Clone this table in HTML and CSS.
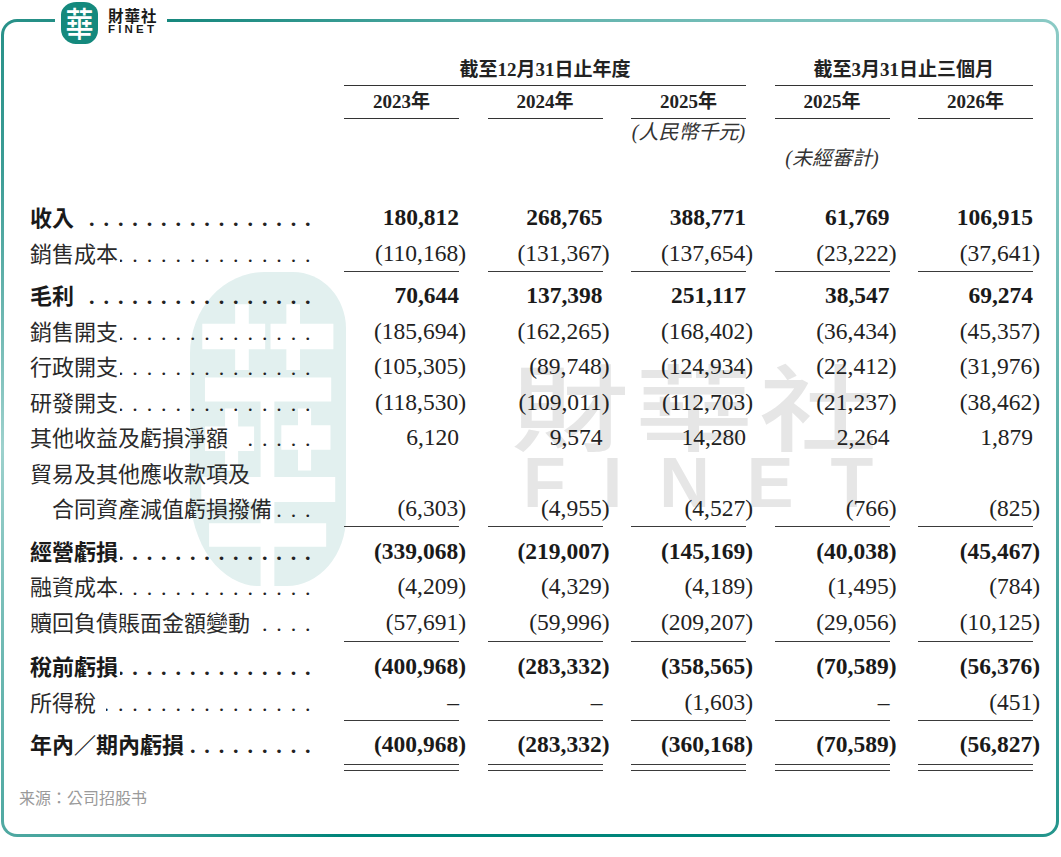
FILE: index.html
```html
<!DOCTYPE html>
<html lang="zh-Hant">
<head>
<meta charset="utf-8">
<title>財務資料</title>
<link rel="stylesheet" href="styles.css">
</head>
<body>
<div class="frame">
  <div class="logo">
    <div class="logo-mark"><span>華</span></div>
    <div class="logo-text"><span class="logo-cn">財華社</span><span class="logo-en">FINET</span></div>
  </div>
  <div class="wm-seal"><span>華</span></div>
  <div class="wm-cn">財華社</div>
  <div class="wm-en">FINET</div>

  <div class="table">
    <div class="hrow h1">
      <div class="grp g1">截至12月31日止年度</div>
      <div class="grp g2">截至3月31日止三個月</div>
    </div>
    <div class="hrow h2">
      <div class="yr c1">2023年</div>
      <div class="yr">2024年</div>
      <div class="yr">2025年</div>
      <div class="yr">2025年</div>
      <div class="yr">2026年</div>
    </div>
    <div class="hrow h3"><div class="note n3">(人民幣千元)</div></div>
    <div class="hrow h4"><div class="note n4">(未經審計)</div></div>

    <div class="rows">
      <div class="row b">
        <div class="label"><span class="t">收入</span><span class="lead sp">..............................</span></div>
        <div class="num">180,812</div><div class="num">268,765</div><div class="num">388,771</div><div class="num">61,769</div><div class="num">106,915</div>
      </div>
      <div class="row">
        <div class="label"><span class="t">銷售成本</span><span class="lead">..............................</span></div>
        <div class="num">(110,168<span class="rp">)</span></div><div class="num">(131,367<span class="rp">)</span></div><div class="num">(137,654<span class="rp">)</span></div><div class="num">(23,222<span class="rp">)</span></div><div class="num">(37,641<span class="rp">)</span></div>
      </div>
      <div class="rule"><i></i><i></i><i></i><i></i><i></i></div>
      <div class="row b">
        <div class="label"><span class="t">毛利</span><span class="lead sp">..............................</span></div>
        <div class="num">70,644</div><div class="num">137,398</div><div class="num">251,117</div><div class="num">38,547</div><div class="num">69,274</div>
      </div>
      <div class="row">
        <div class="label"><span class="t">銷售開支</span><span class="lead">..............................</span></div>
        <div class="num">(185,694<span class="rp">)</span></div><div class="num">(162,265<span class="rp">)</span></div><div class="num">(168,402<span class="rp">)</span></div><div class="num">(36,434<span class="rp">)</span></div><div class="num">(45,357<span class="rp">)</span></div>
      </div>
      <div class="row">
        <div class="label"><span class="t">行政開支</span><span class="lead">..............................</span></div>
        <div class="num">(105,305<span class="rp">)</span></div><div class="num">(89,748<span class="rp">)</span></div><div class="num">(124,934<span class="rp">)</span></div><div class="num">(22,412<span class="rp">)</span></div><div class="num">(31,976<span class="rp">)</span></div>
      </div>
      <div class="row">
        <div class="label"><span class="t">研發開支</span><span class="lead">..............................</span></div>
        <div class="num">(118,530<span class="rp">)</span></div><div class="num">(109,011<span class="rp">)</span></div><div class="num">(112,703<span class="rp">)</span></div><div class="num">(21,237<span class="rp">)</span></div><div class="num">(38,462<span class="rp">)</span></div>
      </div>
      <div class="row">
        <div class="label"><span class="t">其他收益及虧損淨額</span><span class="lead sp">..............................</span></div>
        <div class="num">6,120</div><div class="num">9,574</div><div class="num">14,280</div><div class="num">2,264</div><div class="num">1,879</div>
      </div>
      <div class="row">
        <div class="label"><span class="t">貿易及其他應收款項及</span></div>
      </div>
      <div class="row">
        <div class="label ind"><span class="t">合同資產減值虧損撥備</span><span class="lead">..............................</span></div>
        <div class="num">(6,303<span class="rp">)</span></div><div class="num">(4,955<span class="rp">)</span></div><div class="num">(4,527<span class="rp">)</span></div><div class="num">(766<span class="rp">)</span></div><div class="num">(825<span class="rp">)</span></div>
      </div>
      <div class="rule"><i></i><i></i><i></i><i></i><i></i></div>
      <div class="row b">
        <div class="label"><span class="t">經營虧損</span><span class="lead">..............................</span></div>
        <div class="num">(339,068<span class="rp">)</span></div><div class="num">(219,007<span class="rp">)</span></div><div class="num">(145,169<span class="rp">)</span></div><div class="num">(40,038<span class="rp">)</span></div><div class="num">(45,467<span class="rp">)</span></div>
      </div>
      <div class="row">
        <div class="label"><span class="t">融資成本</span><span class="lead">..............................</span></div>
        <div class="num">(4,209<span class="rp">)</span></div><div class="num">(4,329<span class="rp">)</span></div><div class="num">(4,189<span class="rp">)</span></div><div class="num">(1,495<span class="rp">)</span></div><div class="num">(784<span class="rp">)</span></div>
      </div>
      <div class="row">
        <div class="label"><span class="t">贖回負債賬面金額變動</span><span class="lead sp">..............................</span></div>
        <div class="num">(57,691<span class="rp">)</span></div><div class="num">(59,996<span class="rp">)</span></div><div class="num">(209,207<span class="rp">)</span></div><div class="num">(29,056<span class="rp">)</span></div><div class="num">(10,125<span class="rp">)</span></div>
      </div>
      <div class="rule wide"><i></i><i></i><i></i><i></i><i></i></div>
      <div class="row b">
        <div class="label"><span class="t">稅前虧損</span><span class="lead">..............................</span></div>
        <div class="num">(400,968<span class="rp">)</span></div><div class="num">(283,332<span class="rp">)</span></div><div class="num">(358,565<span class="rp">)</span></div><div class="num">(70,589<span class="rp">)</span></div><div class="num">(56,376<span class="rp">)</span></div>
      </div>
      <div class="row">
        <div class="label"><span class="t">所得稅</span><span class="lead sp">..............................</span></div>
        <div class="num">–</div><div class="num">–</div><div class="num">(1,603<span class="rp">)</span></div><div class="num">–</div><div class="num">(451<span class="rp">)</span></div>
      </div>
      <div class="rule"><i></i><i></i><i></i><i></i><i></i></div>
      <div class="row b">
        <div class="label"><span class="t">年內／期內虧損</span><span class="lead">..............................</span></div>
        <div class="num">(400,968<span class="rp">)</span></div><div class="num">(283,332<span class="rp">)</span></div><div class="num">(360,168<span class="rp">)</span></div><div class="num">(70,589<span class="rp">)</span></div><div class="num">(56,827<span class="rp">)</span></div>
      </div>
      <div class="rule dbl"><i></i><i></i><i></i><i></i><i></i></div>
    </div>
  </div>
  <div class="source">来源：公司招股书</div>
</div>
</body>
</html>
```

FILE: styles.css
```css
html, body {
  margin: 0;
  padding: 0;
  background: #fff;
}
body {
  font-family: "Liberation Serif", "Noto Sans CJK TC", serif;
  color: #222;
  width: 1061px;
  height: 857px;
  overflow: hidden;
}

.frame {
  position: relative;
  margin: 19px 2px 0 1px;
  height: 818px;
  box-sizing: border-box;
  border: 3px solid transparent;
  border-radius: 16px;
  background:
    linear-gradient(#fff, #fff) padding-box,
    conic-gradient(from 0deg at 50% 50%,
      #5fb1ab 0deg, #8ccbc6 55deg, #4aa69f 105deg, #00857a 150deg,
      #00857a 205deg, #4ea8a1 232deg, #9dd1cd 268deg, #3d9d96 296deg,
      #16877d 318deg, #3fa098 340deg, #5fb1ab 360deg) border-box;
}

/* logo on top border */
.logo {
  position: absolute;
  left: 51px;
  top: -22px;
  width: 112px;
  height: 46px;
  background: #fff;
  display: flex;
  align-items: flex-start;
  z-index: 2;
}
.logo-mark {
  margin: 2px 0 0 6px;
  width: 37px;
  height: 42px;
  background: #14897d;
  border-radius: 42% 38% 34% 40% / 30% 28% 34% 36%;
  display: flex;
  align-items: center;
  justify-content: center;
}
.logo-mark span {
  font-family: "Noto Sans CJK TC", sans-serif;
  font-weight: 500;
  font-size: 28px;
  line-height: 1;
  color: #fff;
  transform: scaleY(1.2);
}
.logo-text {
  display: flex;
  flex-direction: column;
  margin: 7px 0 0 10px;
}
.logo-cn {
  font-family: "Noto Sans CJK TC", sans-serif;
  font-weight: 700;
  font-size: 15.5px;
  line-height: 17px;
  color: #1a1a1a;
  letter-spacing: 1px;
}
.logo-en {
  font-family: "Liberation Sans", sans-serif;
  font-weight: 700;
  font-size: 11.5px;
  line-height: 11px;
  color: #1a1a1a;
  letter-spacing: 3.2px;
}

/* watermarks */
.wm-seal {
  position: absolute;
  left: 186px;
  top: 250px;
  width: 156px;
  height: 314px;
  background: #e2f0ef;
  border-radius: 48% 34% 38% 44% / 26% 18% 22% 30%;
  display: flex;
  align-items: center;
  justify-content: center;
  overflow: hidden;
  z-index: 0;
}
.wm-seal span {
  font-family: "Noto Sans CJK TC", sans-serif;
  font-weight: 500;
  font-size: 148px;
  line-height: 1;
  color: #fff;
  transform: scaleY(2.05);
}
.wm-cn {
  position: absolute;
  left: 507px;
  top: 334px;
  font-family: "Noto Sans CJK TC", sans-serif;
  font-weight: 500;
  font-size: 118px;
  line-height: 1;
  letter-spacing: 6px;
  color: #e6e6e6;
  transform: scaleY(0.8);
  transform-origin: top left;
  z-index: 0;
}
.wm-en {
  position: absolute;
  left: 519px;
  top: 426px;
  font-family: "Liberation Sans", sans-serif;
  font-weight: 700;
  font-size: 70px;
  line-height: 1;
  letter-spacing: 37px;
  color: #e6e6e6;
  z-index: 0;
}

/* table */
.table {
  position: relative;
  z-index: 1;
  padding: 33px 0 0 26px;
}
.hrow, .row, .rule {
  display: grid;
  grid-template-columns: 285.5px repeat(5, 115px);
  column-gap: 28.5px;
}
.grp, .yr {
  font-weight: 700;
  font-size: 19px;
  text-align: center;
  border-bottom: 1.5px solid #333;
  white-space: nowrap;
}
.grp { line-height: 30px; }
.g1 { grid-column: 2 / 5; }
.g2 { grid-column: 5 / 7; }
.yr { line-height: 32px; }
.c1 { grid-column: 2; }
.note {
  font-style: italic;
  font-size: 20px;
  text-align: center;
  color: #333;
  white-space: nowrap;
}
.h3 .note { line-height: 26px; }
.h4 .note { line-height: 27px; }
.n3 { grid-column: 4; }
.n4 { grid-column: 5; }

.rows { margin-top: 27px; }
.row {
  height: 35.5px;
  align-items: center;
}
.label {
  display: flex;
  align-items: baseline;
  font-family: "Noto Sans CJK TC", sans-serif;
  font-size: 22px;
  line-height: 35.5px;
  color: #2a2a2a;
  padding-right: 0;
  min-width: 0;
}
.label .t { white-space: nowrap; }
.label.ind { padding-left: 22px; }
.lead {
  flex: 1;
  min-width: 0;
  overflow: hidden;
  white-space: nowrap;
  direction: rtl;
  font-family: "Liberation Serif", serif;
  font-size: 22px;
  letter-spacing: 8.9px;
  color: #222;
  margin-left: 2px;
  margin-right: -4px;
}
.lead.sp { margin-left: 10px; }
.num {
  text-align: right;
  font-size: 23.5px;
  line-height: 35.5px;
  white-space: nowrap;
  color: #222;
}
.rp { margin-right: -0.3em; }
.row.b .label { font-weight: 700; color: #1a1a1a; }
.row.b .num { font-weight: 700; color: #1a1a1a; }

.rule { height: 7px; }
.rule.wide { height: 9px; }
.rule i {
  display: block;
  border-top: 1.5px solid #3a3a3a;
  margin-top: 0.75px;
}
.rule.wide i { margin-top: 2px; }
.rule i:first-child { grid-column: 2; }
.rule.dbl { height: 12px; }
.rule.dbl i {
  margin-top: 2.5px;
  height: 4.5px;
  border-bottom: 1.5px solid #3a3a3a;
}

.source {
  position: relative;
  z-index: 1;
  margin: 13px 0 0 15px;
  font-family: "Noto Sans CJK SC", sans-serif;
  font-size: 16px;
  line-height: 20px;
  color: #9a9a9a;
}
```
